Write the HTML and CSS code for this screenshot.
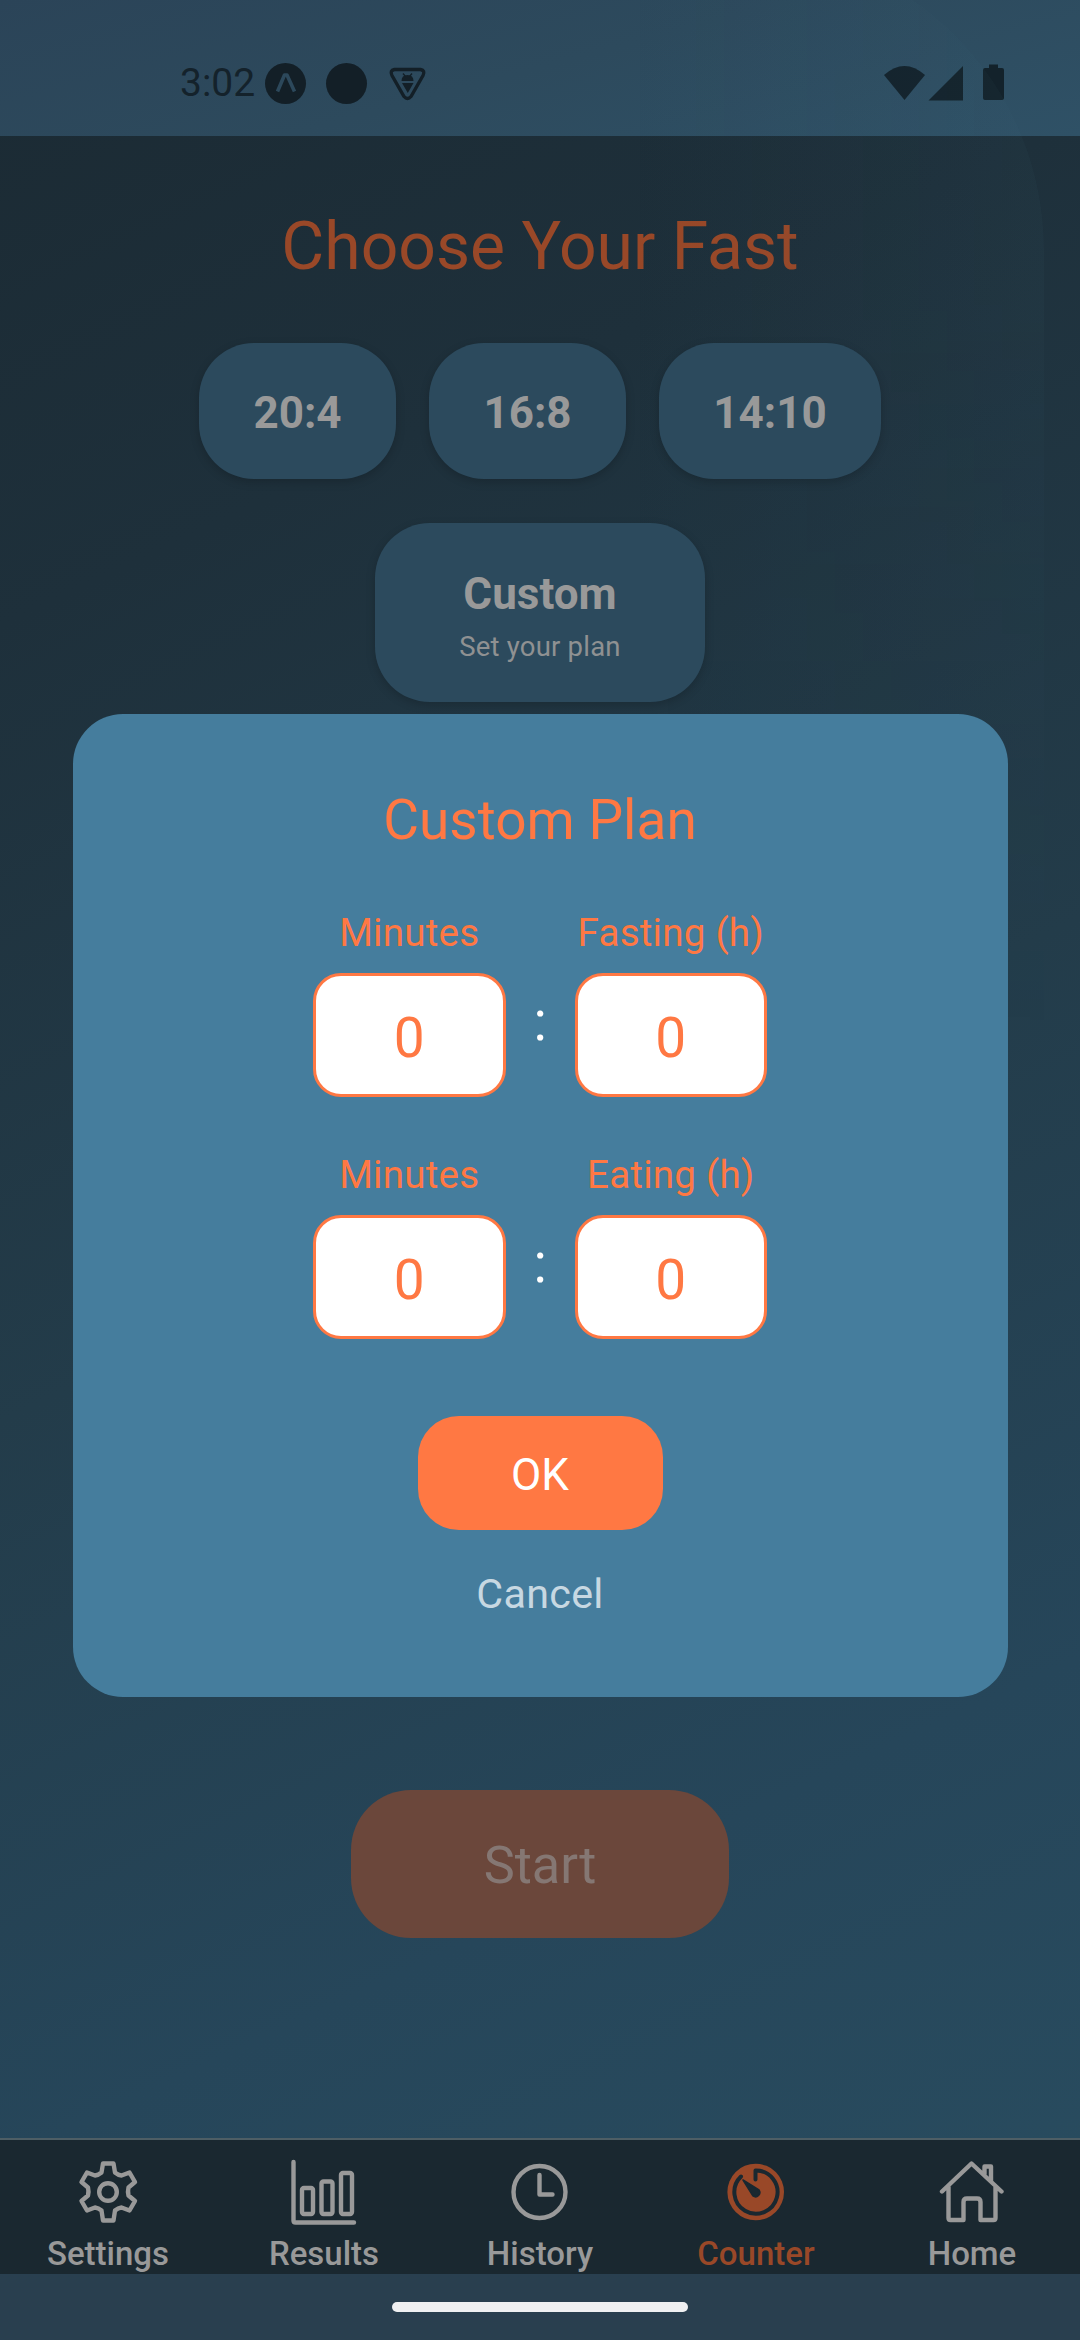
FILE: index.html
```html
<!DOCTYPE html>
<html lang="en">
<head>
<meta charset="utf-8">
<title>Choose Your Fast</title>
<link rel="stylesheet" href="styles.css">
</head>
<body>
<div class="phone">
  <header class="status">
    <span class="clock">3:02</span>
    <svg class="status-left" viewBox="0 0 170 42" width="170" height="42">
      <circle cx="20.500" cy="20.500" r="20.500" fill="#131f27"/>
      <path d="M12.500 28.500 19.500 12h2.500l7.500 16.500" fill="none" stroke="#2c485b" stroke-width="3.600" stroke-linejoin="round"/>
      <circle cx="81.500" cy="20.500" r="20.500" fill="#131f27"/>
      <path d="M129.500 6.500h26q5 1 2.500 6l-12 21q-3.500 4-7 0l-12-21q-2.500-5 2.500-6Z" fill="none" stroke="#131f27" stroke-width="3.400"/>
      <path d="M136.500 18q0-6 6-6t6 6ZM137 20h11.500l-5.700 10Z" fill="#131f27"/>
      <path d="m138 10.500 2.500 3m6.500-3-2.500 3" stroke="#131f27" stroke-width="1.300"/>
    </svg>
    <svg class="status-right" viewBox="0 0 122 38" width="122" height="38">
      <path d="M0 11Q20.500-7 41 11L20.500 36Z" fill="#13222b"/>
      <path d="M44.500 36.500 79 2v34.500Z" fill="#13222b"/>
      <path d="M105 .5h9V4h4q2 0 2 2v28q0 2-2 2h-17q-2 0-2-2V6q0-2 2-2h4Z" fill="#13222b"/>
    </svg>
  </header>

  <main class="screen">
    <h1 class="title">Choose Your Fast</h1>
    <div class="plans">
      <button class="plan">20:4</button>
      <button class="plan">16:8</button>
      <button class="plan wide">14:10</button>
      <button class="plan custom">Custom<small>Set your plan</small></button>
    </div>

    <section class="modal">
      <h2>Custom Plan</h2>
      <div class="pair">
        <label class="field"><span>Minutes</span><output>0</output></label>
        <b class="colon">:</b>
        <label class="field"><span>Fasting (h)</span><output>0</output></label>
      </div>
      <div class="pair">
        <label class="field"><span>Minutes</span><output>0</output></label>
        <b class="colon">:</b>
        <label class="field"><span>Eating (h)</span><output>0</output></label>
      </div>
      <button class="ok">OK</button>
      <button class="cancel">Cancel</button>
    </section>

    <button class="start">Start</button>
  </main>

  <nav class="tabs">
    <a class="tab">
      <svg class="icon" viewBox="0 0 66 66"><path d="M28 4.500h10.500l1.500 9q3 2.500 6.500 3l8-3L60 23l-6.500 5.500q-1 4 0 8L60 42l-5.500 9.500-8-3q-3.500.5-6.500 3l-1.500 10H28l-1.500-10q-3-2.500-6.500-3l-8 3L6.500 42l6.500-5.500q1-4 0-8L6.500 23 12 13.500l8 3q3.500-.5 6.500-3Z"/><circle cx="33" cy="33" r="8.800"/></svg>
      <span>Settings</span>
    </a>
    <a class="tab">
      <svg class="icon" viewBox="0 0 66 66"><path d="M2.500 3v58.500q0 2 2 2H63"/><rect x="11" y="29" width="11" height="26" rx="2"/><rect x="30.500" y="22.500" width="11" height="32.500" rx="2"/><rect x="50" y="14" width="11" height="41" rx="2"/></svg>
      <span>Results</span>
    </a>
    <a class="tab">
      <svg class="icon" viewBox="0 0 66 66"><circle cx="32.500" cy="33" r="26"/><path d="M32.500 16v19.500H45.500"/></svg>
      <span>History</span>
    </a>
    <a class="tab active">
      <svg class="icon counter" viewBox="0 0 66 66"><circle class="disc" cx="32.700" cy="33" r="28.300"/><path class="dial" d="M18 17.500A21.600 21.600 0 1 0 32.500 11.500V20.500"/><path class="hand" d="M20 21 36 31A4.300 4.300 0 0 1 30 37Z"/></svg>
      <span>Counter</span>
    </a>
    <a class="tab">
      <svg class="icon" viewBox="0 0 66 66"><path d="M3 32.500 32.500 4.500 62.500 32.500M9.500 28v31q0 2 2 2h13V43q0-3.500 3.500-3.500h10q3.500 0 3.500 3.500v18h13q2 0 2-2V28M45.500 15V7.500h6.500V22"/></svg>
      <span>Home</span>
    </a>
  </nav>
  <footer class="gesture"><i class="handle"></i></footer>
</div>
</body>
</html>
```
FILE: styles.css
```css
* { box-sizing: border-box; }
body { margin: 0; font-family: Roboto, sans-serif; }
h1, h2 { margin: 0; font-weight: 400; }
button { border: 0; padding: 0; font-family: inherit; color: inherit; }

.phone {
  position: relative;
  display: flex;
  flex-direction: column;
  width: 1080px;
  height: 2340px;
  overflow: hidden;
  background: linear-gradient(155deg, #1b2a33 0%, #1e303b 22%, #233c4a 50%, #26465a 76%, #294d60 100%);
}
/* large rounded glow behind the top of the screen */
.phone::before {
  content: "";
  position: absolute;
  left: 0;
  top: -54px;
  width: 1044px;
  height: 1100px;
  border-top-right-radius: 304px;
  background: linear-gradient(90deg, transparent 60%, rgba(70, 115, 135, .06));
  -webkit-mask-image: linear-gradient(#000 30%, transparent);
  mask-image: linear-gradient(#000 30%, transparent);
  z-index: 1;
}

.status {
  display: flex;
  align-items: flex-start;
  height: 136px;
  padding: 62px 74px 0 180px;
  background: linear-gradient(165deg, #2b4458, #2d4a5d 50%, #2f5166);
}
.clock { font-size: 39px; line-height: 42px; color: #14222b; width: 85px; white-space: nowrap; }
.status-left { margin-top: 1px; }
.status-right { margin: 2px 0 0 auto; }

.screen {
  display: flex;
  flex-direction: column;
  align-items: center;
  height: 2002px;
}
.title {
  margin-top: 69px;
  font-size: 66px;
  line-height: 84px;
  color: #994828;
}
.plans {
  position: relative;
  z-index: 2;
  display: flex;
  flex-wrap: wrap;
  justify-content: center;
  gap: 44px 33px;
  width: 760px;
  margin-top: 54px;
}
.plan {
  width: 197px;
  height: 136px;
  padding-top: 3px;
  border-radius: 55px;
  background: #2c4a5d;
  color: #999;
  font-size: 44px;
  line-height: 52px;
  font-weight: 700;
  box-shadow: 0 3px 10px rgba(0, 0, 0, .18);
}
.wide { width: 222px; }
.custom { height: 179px; width: 330px; padding-top: 9px; }
.custom small {
  display: block;
  margin-top: 7px;
  font-size: 27.5px;
  line-height: 40px;
  font-weight: 400;
  letter-spacing: .2px;
  color: #8f9192;
}

.modal {
  position: relative;
  z-index: 2;
  display: flex;
  flex-direction: column;
  align-items: center;
  width: 935px;
  height: 983px;
  margin-top: 12px;
  padding-top: 73px;
  border-radius: 50px;
  background: #457d9d;
  color: #ff7843;
}
.modal h2 { font-size: 55px; line-height: 66px; margin-bottom: 29.5px; }
.pair { display: flex; align-items: center; gap: 28px; height: 242px; }
.field { display: flex; flex-direction: column; align-items: center; width: 192.5px; }
.field span { font-size: 38.5px; line-height: 46px; letter-spacing: .25px; white-space: nowrap; }
.field output {
  display: block;
  width: 100%;
  height: 124px;
  margin-top: 17px;
  border: 3px solid #ff7843;
  border-radius: 28px;
  background: #fff;
  font-size: 55px;
  line-height: 124px;
  text-align: center;
}
.colon { width: 13px; padding-top: 35px; color: #fff; font-size: 55px; line-height: 66px; font-weight: 400; }
.ok {
  width: 245px;
  height: 114px;
  margin-top: 49.5px;
  padding-top: 3px;
  border-radius: 41px;
  background: #ff7843;
  color: #fff;
  font-size: 44px;
}
.cancel { margin-top: 39px; background: none; color: #c7d8e2; font-size: 41.25px; line-height: 50px; letter-spacing: .3px; }

.start {
  width: 378px;
  height: 148px;
  margin-top: 93px;
  padding-top: 3px;
  border-radius: 60px;
  background: #6b473b;
  color: #857773;
  font-size: 52.25px;
}

.tabs {
  display: flex;
  height: 136px;
  border-top: 2px solid #4e5e65;
  background: #1a2830;
  color: #999;
}
.tab { flex: 1; display: flex; flex-direction: column; align-items: center; padding-top: 19px; font-size: 33px; font-weight: 500; line-height: 40px; }
.icon { width: 66px; height: 66px; margin-bottom: 9px; fill: none; stroke: #999; stroke-width: 4.400; stroke-linecap: round; stroke-linejoin: round; }
.active { color: #994828; }
.counter .disc { fill: #994828; stroke: none; }
.counter .dial { stroke: #1a2830; stroke-width: 4; }
.counter .hand { fill: #1a2830; stroke: #1a2830; stroke-width: 1.500; }

.gesture { display: flex; justify-content: center; align-items: center; height: 66px; background: #293f4f; }
.handle { width: 296px; height: 10px; border-radius: 5px; background: #eff0f2; }
```
